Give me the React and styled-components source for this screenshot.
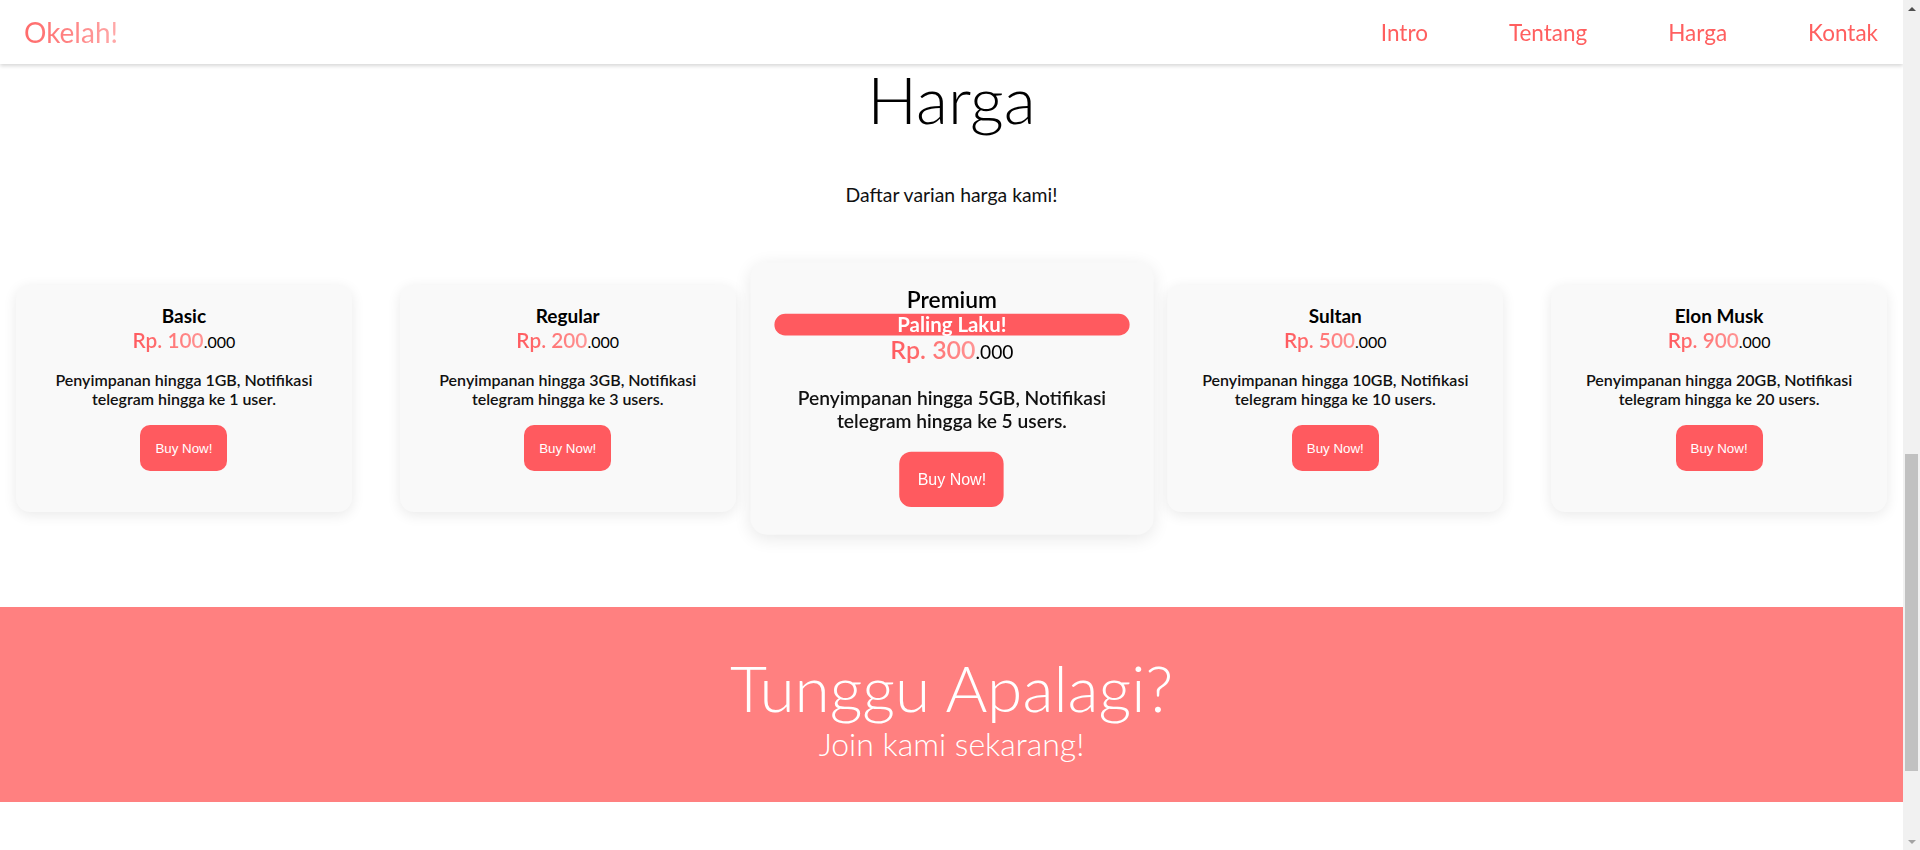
import React from 'react'
import styled, {createGlobalStyle} from 'styled-components'

const GlobalStyle = createGlobalStyle`
  * {
    box-sizing: border-box;
  }
  html, body {
    scrollbar-width: none;
  }
  body::-webkit-scrollbar {
    display: none;
  }
  body {
    margin: 0;
    font-family: Lato, "Open Sans", sans-serif;
    color: #111;
    background: #fff;
  }
`

const Nav = styled.nav`
  position: fixed;
  top: 0;
  left: 0;
  right: 17px;
  z-index: 10;
  height: 64px;
  padding: 0 25px 0 24px;
  display: flex;
  align-items: center;
  justify-content: space-between;
  background: #fff;
  box-shadow: 0 2px 4px rgba(0, 0, 0, 0.16);
`

const Logo = styled.a`
  font-size: 28px;
  background: linear-gradient(90deg, #ff6a6a 0%, #ff8a8a 60%, #ffaaaa 100%);
  -webkit-background-clip: text;
  background-clip: text;
  color: transparent;
  text-decoration: none;
`

const Links = styled.ul`
  display: flex;
  gap: 81px;
  margin: 0;
  padding: 0;
  list-style: none;
`

const NavLink = styled.a`
  font-size: 22.5px;
  color: #ff5f5f;
  text-decoration: none;
`

// fake browser scrollbar, the page in the shot is scrolled down to #harga
const ScrollBar = styled.aside`
  position: fixed;
  top: 0;
  right: 0;
  bottom: 0;
  width: 17px;
  z-index: 20;
  display: flex;
  flex-direction: column;
  background: #f1f1f1;
`

const Arrow = styled.div`
  height: 17px;
  display: flex;
  align-items: center;
  justify-content: center;

  &::before {
    content: '';
    border-left: 4px solid transparent;
    border-right: 4px solid transparent;
    ${props => (props.down
      ? 'border-top: 4px solid #a3a3a3;'
      : 'border-bottom: 4px solid #505050;')}
  }
`

const Track = styled.div`
  flex: 1;
  padding: 437px 2px 0;
`

const Thumb = styled.div`
  height: 317px;
  background: #c1c1c1;
`

const Main = styled.main`
  margin-right: 17px;
  padding-top: 59px;
  padding-bottom: 220px;
`

const Section = styled.section`
  text-align: center;
`

const Title = styled.h2`
  margin: 0;
  font-size: 66px;
  font-weight: 300;
  line-height: normal;
  color: #000;
`

const Subtitle = styled.p`
  margin: 45px 0 0;
  font-size: 19.4px;
  color: #111;
`

const CardRow = styled.div`
  display: flex;
  align-items: stretch;
  gap: 48px;
  padding: 0 16px;
  margin-top: 79px;
`

const Card = styled.div`
  flex: 1;
  padding: 19px 20px 23px;
  background: #f9f9f9;
  border-radius: 14px;
  box-shadow: 0 3px 14px rgba(0, 0, 0, 0.09);
  transform: ${props => (props.featured ? 'scale(1.2)' : 'none')};
  position: relative;
  z-index: ${props => (props.featured ? 1 : 0)};
`

const PlanName = styled.h3`
  margin: 0;
  font-size: 19px;
  line-height: 24px;
  font-weight: ${props => (props.featured ? 600 : 700)};
  color: #000;
`

const Badge = styled.div`
  height: 18px;
  line-height: 18px;
  border-radius: 10px;
  background: #ff5a5f;
  color: #fff;
  font-size: 17px;
  font-weight: 700;
`

const Price = styled.div`
  line-height: 24px;
  font-size: 16px;
  color: #000;
`

const Amount = styled.span`
  font-size: 20.8px;
  font-weight: 600;
  background: linear-gradient(90deg, #ff5a5f 0%, #ff7272 45%, #ff9595 100%);
  -webkit-background-clip: text;
  background-clip: text;
  color: transparent;
`

const Desc = styled.p`
  margin: 16px 0 0;
  font-size: 16px;
  line-height: 19.2px;
  font-weight: 600;
  color: #111;
`

const BuyButton = styled.button`
  margin-top: 17px;
  height: 46px;
  padding: 0 15px;
  border: none;
  border-radius: 10px;
  background: #ff5a5f;
  color: #fff;
  font-family: "Liberation Sans", Arial, sans-serif;
  font-size: 13.33px;
  cursor: pointer;
`

const Cta = styled.section`
  margin-top: 95px;
  padding: 42px 0 39px;
  background: #ff8080;
  text-align: center;
  color: #fff;
`

const CtaTitle = styled.h2`
  margin: 0;
  font-size: 64px;
  font-weight: 300;
  line-height: normal;
`

const CtaText = styled.p`
  margin: -2px 0 0;
  font-size: 32px;
  font-weight: 300;
  line-height: normal;
`

const plans = [
  {name: 'Basic', price: '100', storage: '1GB', users: '1 user'},
  {name: 'Regular', price: '200', storage: '3GB', users: '3 users'},
  {name: 'Premium', price: '300', storage: '5GB', users: '5 users', featured: true},
  {name: 'Sultan', price: '500', storage: '10GB', users: '10 users'},
  {name: 'Elon Musk', price: '900', storage: '20GB', users: '20 users'},
]

const PriceCard = ({plan}) => (
  <Card featured={plan.featured}>
    <PlanName featured={plan.featured}>{plan.name}</PlanName>
    {plan.featured && <Badge>Paling Laku!</Badge>}
    <Price>
      <Amount>Rp. {plan.price}</Amount>.000
    </Price>
    <Desc>
      Penyimpanan hingga {plan.storage}, Notifikasi telegram hingga ke {plan.users}.
    </Desc>
    <BuyButton>Buy Now!</BuyButton>
  </Card>
)

const App = () => {
  return (
    <>
      <GlobalStyle />
      <Nav>
        <Logo href="#">Okelah!</Logo>
        <Links>
          <li><NavLink href="#intro">Intro</NavLink></li>
          <li><NavLink href="#tentang">Tentang</NavLink></li>
          <li><NavLink href="#harga">Harga</NavLink></li>
          <li><NavLink href="#kontak">Kontak</NavLink></li>
        </Links>
      </Nav>
      <ScrollBar>
        <Arrow />
        <Track>
          <Thumb />
        </Track>
        <Arrow down />
      </ScrollBar>
      <Main>
        <Section id="harga">
          <Title>Harga</Title>
          <Subtitle>Daftar varian harga kami!</Subtitle>
          <CardRow>
            {plans.map(plan => (
              <PriceCard key={plan.name} plan={plan} />
            ))}
          </CardRow>
        </Section>
        <Cta>
          <CtaTitle>Tunggu Apalagi?</CtaTitle>
          <CtaText>Join kami sekarang!</CtaText>
        </Cta>
      </Main>
    </>
  )
}

export default App
